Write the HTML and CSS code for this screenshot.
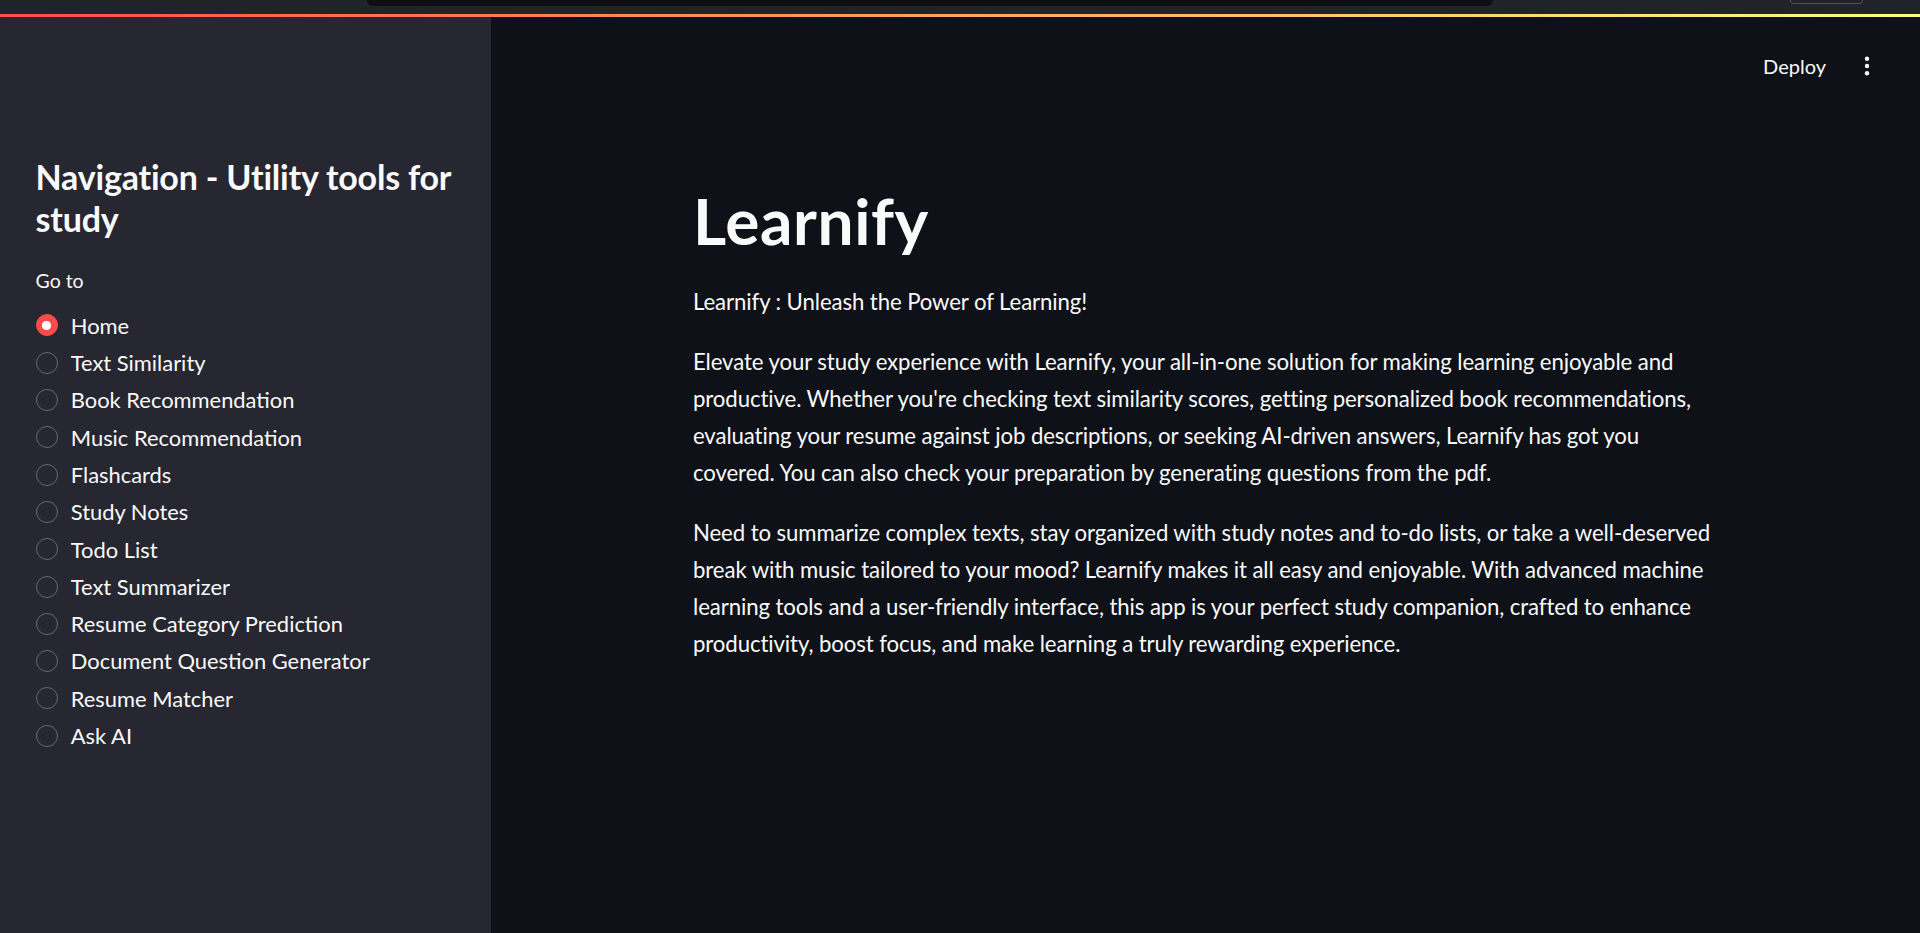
FILE: index.html
```html
<!DOCTYPE html>
<html lang="en">
<head>
<meta charset="utf-8">
<title>Learnify</title>
<link rel="stylesheet" href="styles.css">
</head>
<body>
<div class="chrome">
  <div class="omnibox"></div>
  <div class="chrome-btn"></div>
</div>
<div class="decoration"></div>
<div class="app">
  <aside class="sidebar">
    <h1 class="side-title">Navigation - Utility tools for study</h1>
    <div class="radio-label">Go to</div>
    <div class="radio-group">
      <div class="radio selected"><span class="dot"></span><span class="radio-text">Home</span></div>
      <div class="radio"><span class="dot"></span><span class="radio-text">Text Similarity</span></div>
      <div class="radio"><span class="dot"></span><span class="radio-text">Book Recommendation</span></div>
      <div class="radio"><span class="dot"></span><span class="radio-text">Music Recommendation</span></div>
      <div class="radio"><span class="dot"></span><span class="radio-text">Flashcards</span></div>
      <div class="radio"><span class="dot"></span><span class="radio-text">Study Notes</span></div>
      <div class="radio"><span class="dot"></span><span class="radio-text">Todo List</span></div>
      <div class="radio"><span class="dot"></span><span class="radio-text">Text Summarizer</span></div>
      <div class="radio"><span class="dot"></span><span class="radio-text">Resume Category Prediction</span></div>
      <div class="radio"><span class="dot"></span><span class="radio-text">Document Question Generator</span></div>
      <div class="radio"><span class="dot"></span><span class="radio-text">Resume Matcher</span></div>
      <div class="radio"><span class="dot"></span><span class="radio-text">Ask AI</span></div>
    </div>
  </aside>
  <main class="main">
    <header class="toolbar">
      <span class="deploy">Deploy</span>
      <span class="menu">
        <svg width="20" height="24" viewBox="0 0 20 24"><circle cx="10" cy="4.7" r="2.2" fill="#fafafa"/><circle cx="10" cy="12" r="2.2" fill="#fafafa"/><circle cx="10" cy="19.3" r="2.2" fill="#fafafa"/></svg>
      </span>
    </header>
    <div class="block">
      <h1 class="title">Learnify</h1>
      <p>Learnify : Unleash the Power of Learning!</p>
      <p>Elevate your study experience with Learnify, your all-in-one solution for making learning enjoyable and productive. Whether you're checking text similarity scores, getting personalized book recommendations, evaluating your resume against job descriptions, or seeking AI-driven answers, Learnify has got you covered. You can also check your preparation by generating questions from the pdf.</p>
      <p>Need to summarize complex texts, stay organized with study notes and to-do lists, or take a well-deserved break with music tailored to your mood? Learnify makes it all easy and enjoyable. With advanced machine learning tools and a user-friendly interface, this app is your perfect study companion, crafted to enhance productivity, boost focus, and make learning a truly rewarding experience.</p>
    </div>
  </main>
</div>
</body>
</html>
```

FILE: styles.css
```css
* { box-sizing: border-box; }
html, body {
  margin: 0;
  padding: 0;
  height: 933px;
  overflow: hidden;
  background: #0e1117;
  color: #fafafa;
  font-family: "Lato", "Liberation Sans", sans-serif;
}

.chrome {
  height: 14px;
  background: #202428;
  display: flex;
  align-items: flex-start;
}
.omnibox {
  margin-left: 367px;
  width: 1126px;
  height: 6px;
  background: #0d0f13;
  border-radius: 0 0 8px 8px;
}
.chrome-btn {
  margin-left: 297px;
  width: 73px;
  height: 4px;
  border: 1px solid #4a5055;
  border-top: none;
  border-radius: 0 0 8px 8px;
}

.decoration {
  height: 3px;
  background: linear-gradient(90deg, #ff4b4b, #fffd80);
}

.app {
  display: flex;
  height: 916px;
}

.sidebar {
  width: 491px;
  flex: 0 0 491px;
  background: #262730;
  padding: 139px 24px 0 35.5px;
}
.side-title {
  margin: 0;
  font-size: 34px;
  line-height: 41.5px;
  font-weight: 700;
  letter-spacing: -0.2px;
}
.radio-label {
  margin-top: 30px;
  font-size: 19.5px;
  line-height: 24px;
}
.radio-group {
  margin-top: 13.8px;
  display: flex;
  flex-direction: column;
}
.radio {
  height: 37.3px;
  display: flex;
  align-items: center;
  gap: 13.3px;
  font-size: 21.9px;
  line-height: 37.3px;
}
.dot {
  width: 22px;
  height: 22px;
  flex: 0 0 22px;
  border-radius: 50%;
  border: 1.5px solid #66676e;
  display: flex;
  align-items: center;
  justify-content: center;
}
.radio.selected .dot {
  background: #ff4b4b;
  border-color: #ff4b4b;
}
.radio.selected .dot::after {
  content: "";
  width: 8.5px;
  height: 8.5px;
  border-radius: 50%;
  background: #ffffff;
}

.main {
  flex: 1;
  display: flex;
  flex-direction: column;
}
.toolbar {
  height: 98.6px;
  display: flex;
  align-items: center;
  justify-content: flex-end;
  gap: 31px;
  padding-right: 43px;
}
.deploy {
  font-size: 20px;
  line-height: 24px;
}
.menu {
  display: flex;
  width: 20px;
  height: 24px;
}
.block {
  width: 1025px;
  margin: 0 auto;
  padding-top: 67.2px;
}
.title {
  margin: 0 0 24.2px;
  font-size: 64px;
  line-height: 75.6px;
  font-weight: 700;
  letter-spacing: 0.6px;
}
.block p {
  margin: 0 0 23px;
  font-size: 22.2px;
  line-height: 37px;
  letter-spacing: -0.1px;
}
```
